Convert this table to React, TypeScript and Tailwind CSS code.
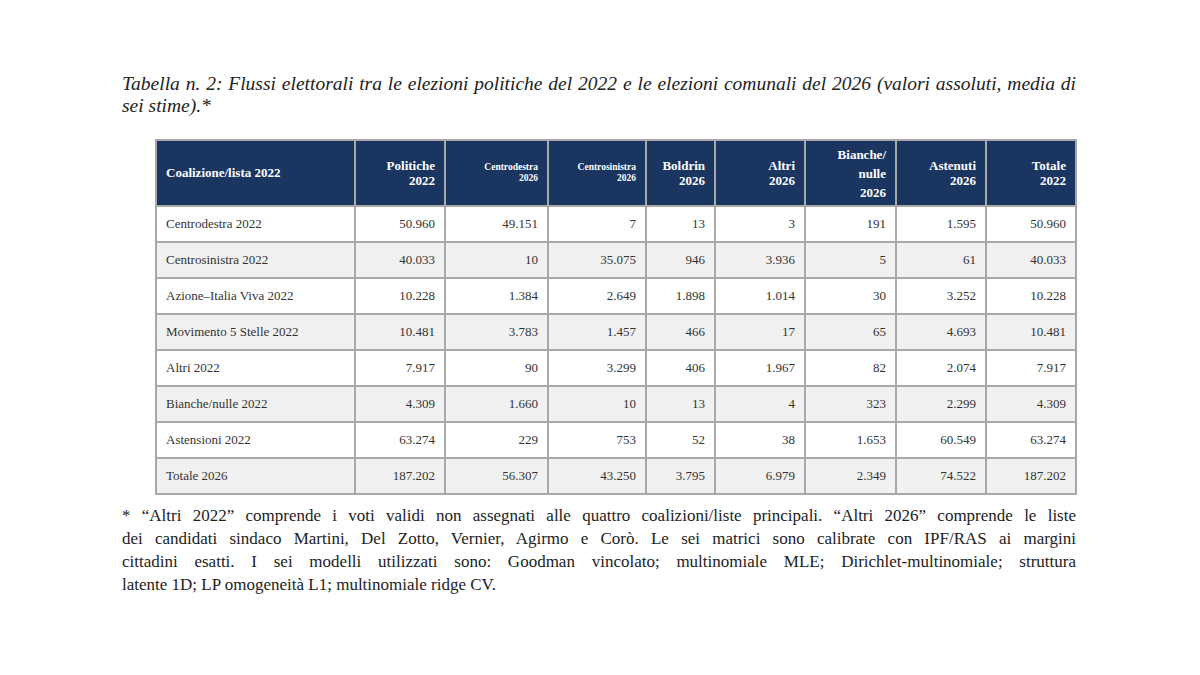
const serif = { fontFamily: '"Liberation Serif", "Times New Roman", serif' };

type Row = { label: string; values: string[] };

const rows: Row[] = [
  { label: 'Centrodestra 2022', values: ['50.960', '49.151', '7', '13', '3', '191', '1.595', '50.960'] },
  { label: 'Centrosinistra 2022', values: ['40.033', '10', '35.075', '946', '3.936', '5', '61', '40.033'] },
  { label: 'Azione–Italia Viva 2022', values: ['10.228', '1.384', '2.649', '1.898', '1.014', '30', '3.252', '10.228'] },
  { label: 'Movimento 5 Stelle 2022', values: ['10.481', '3.783', '1.457', '466', '17', '65', '4.693', '10.481'] },
  { label: 'Altri 2022', values: ['7.917', '90', '3.299', '406', '1.967', '82', '2.074', '7.917'] },
  { label: 'Bianche/nulle 2022', values: ['4.309', '1.660', '10', '13', '4', '323', '2.299', '4.309'] },
  { label: 'Astensioni 2022', values: ['63.274', '229', '753', '52', '38', '1.653', '60.549', '63.274'] },
  { label: 'Totale 2026', values: ['187.202', '56.307', '43.250', '3.795', '6.979', '2.349', '74.522', '187.202'] },
];

const widths = [199, 90, 103, 98, 69, 90, 91, 90, 90];

function Head({ lines, small, leading }: { lines: string[]; small?: boolean; leading?: string }) {
  return (
    <th
      className={`border-2 border-[#a8a8a8] px-[9px] text-right align-middle font-bold text-white ${
        small ? 'text-[9.5px] leading-[11px]' : `text-[13px] ${leading ?? 'leading-[15px]'}`
      }`}
    >
      {lines.map((l) => (
        <div key={l}>{l}</div>
      ))}
    </th>
  );
}

function JustLine({ children, last }: { children: string; last?: boolean }) {
  return (
    <div className={last ? 'text-left' : 'text-justify [text-align-last:justify]'}>{children}</div>
  );
}

export default function App() {
  return (
    <div className="min-h-screen w-[1200px] bg-white" style={serif}>
      <div className="ml-[122px] w-[954px] pt-[73px]">
        <div className="text-[19.5px] leading-[22px] italic text-[#222]">
          <JustLine>
            Tabella n. 2: Flussi elettorali tra le elezioni politiche del 2022 e le elezioni comunali del 2026 (valori assoluti, media di
          </JustLine>
          <JustLine last>sei stime).*</JustLine>
        </div>

        <table className="mt-[22px] ml-[33px] w-[920px] table-fixed border-collapse">
          <colgroup>
            {widths.map((w, i) => (
              <col key={i} style={{ width: w }} />
            ))}
          </colgroup>
          <thead>
            <tr className="h-[66px] bg-[#1a3560]">
              <th className="border-2 border-[#a8a8a8] px-[9px] text-left align-middle text-[13px] font-bold text-white">
                Coalizione/lista 2022
              </th>
              <Head lines={['Politiche', '2022']} />
              <Head lines={['Centrodestra', '2026']} small />
              <Head lines={['Centrosinistra', '2026']} small />
              <Head lines={['Boldrin', '2026']} />
              <Head lines={['Altri', '2026']} />
              <Head lines={['Bianche/', 'nulle', '2026']} leading="leading-[19px]" />
              <Head lines={['Astenuti', '2026']} />
              <Head lines={['Totale', '2022']} />
            </tr>
          </thead>
          <tbody>
            {rows.map((r, i) => (
              <tr key={r.label} className={`h-[36px] ${i % 2 === 1 ? 'bg-[#f1f1f1]' : 'bg-white'}`}>
                <td className="border-2 border-[#a8a8a8] px-[9px] text-left text-[13px] text-[#333]">{r.label}</td>
                {r.values.map((v, j) => (
                  <td key={j} className="border-2 border-[#a8a8a8] px-[9px] text-right text-[13px] text-[#333]">
                    {v}
                  </td>
                ))}
              </tr>
            ))}
          </tbody>
        </table>

        <div className="mt-[9px] text-[17px] leading-[23px] text-[#222]">
          <JustLine>
            * “Altri 2022” comprende i voti validi non assegnati alle quattro coalizioni/liste principali. “Altri 2026” comprende le liste
          </JustLine>
          <JustLine>
            dei candidati sindaco Martini, Del Zotto, Vernier, Agirmo e Corò. Le sei matrici sono calibrate con IPF/RAS ai margini
          </JustLine>
          <JustLine>
            cittadini esatti. I sei modelli utilizzati sono: Goodman vincolato; multinomiale MLE; Dirichlet-multinomiale; struttura
          </JustLine>
          <JustLine last>latente 1D; LP omogeneità L1; multinomiale ridge CV.</JustLine>
        </div>
      </div>
    </div>
  );
}
